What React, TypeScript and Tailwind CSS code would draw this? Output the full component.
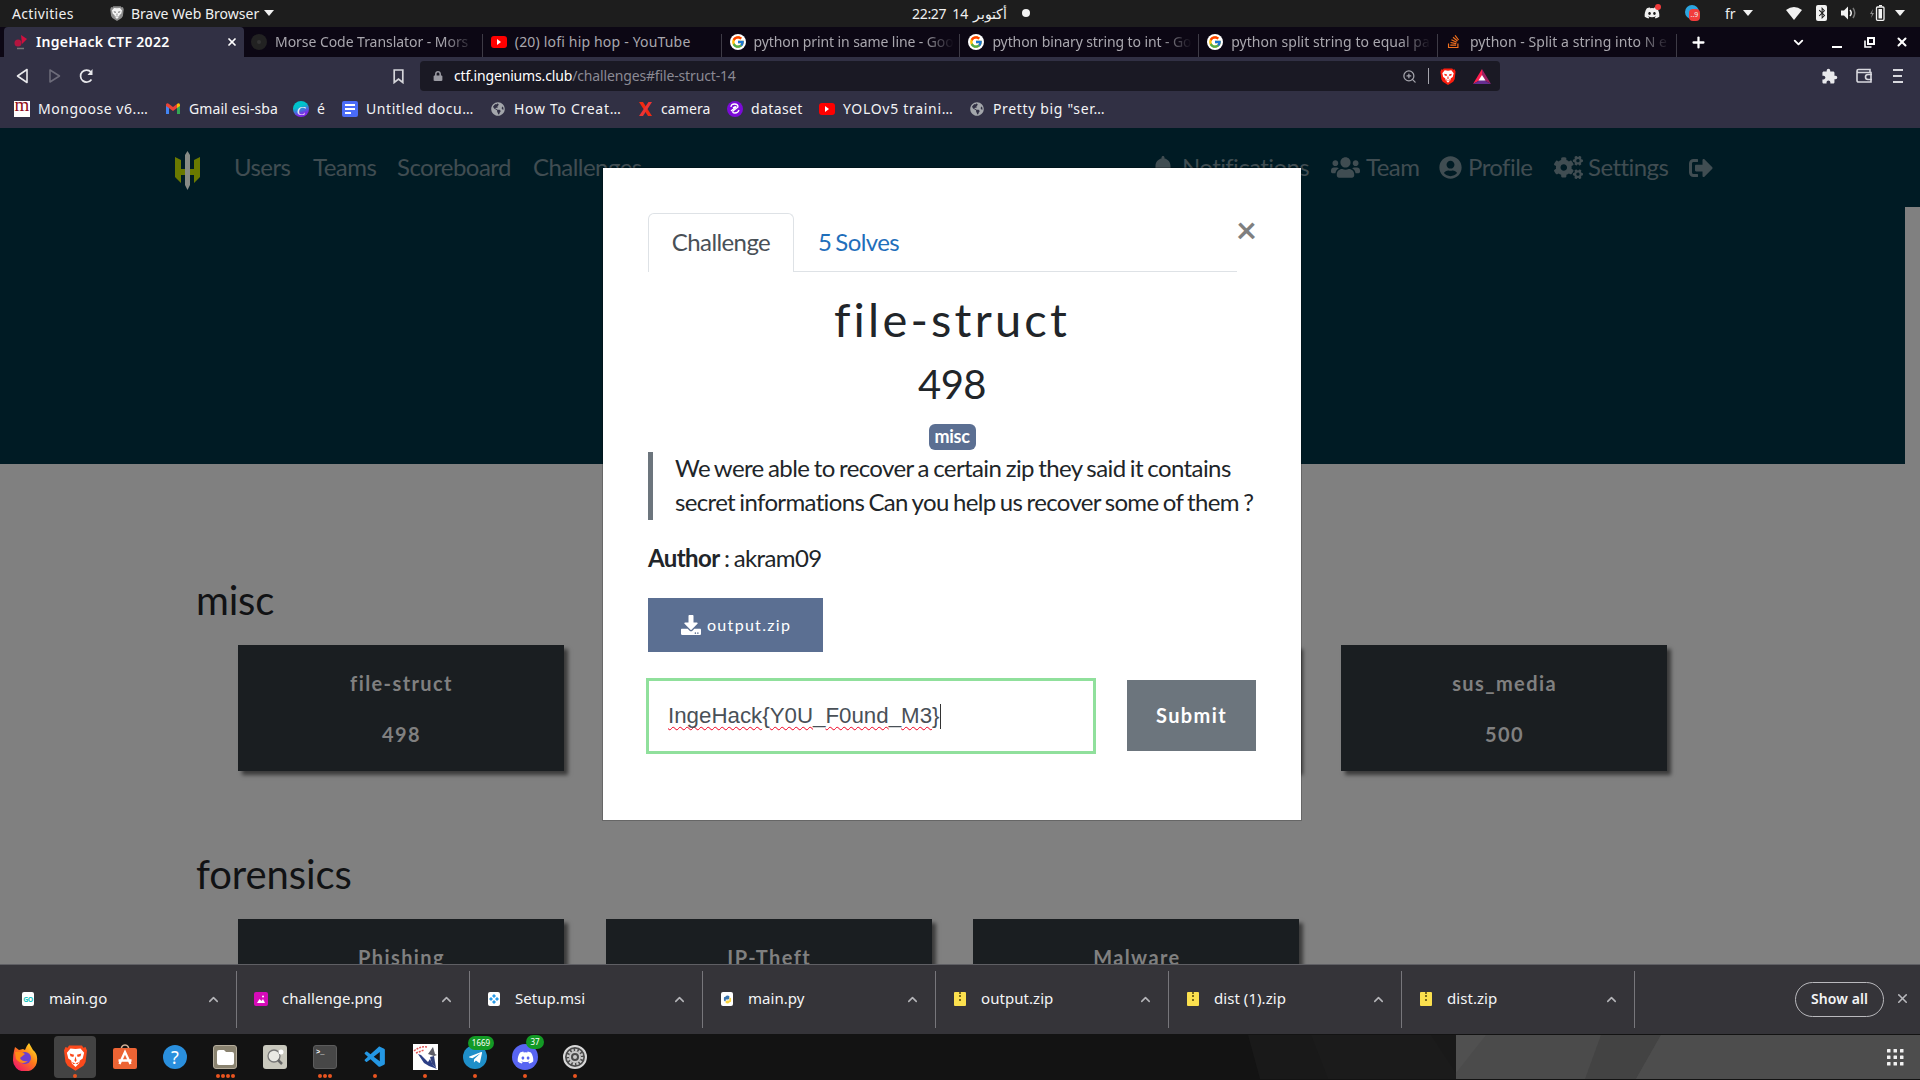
import React from "react";
import { FaBell, FaUsers, FaUserCircle, FaCogs, FaSignOutAlt, FaDownload, FaDiscord, FaLock, FaBluetoothB, FaStackOverflow, FaTelegramPlane, FaGlobeAmericas } from "react-icons/fa";
import { MdExtension } from "react-icons/md";
import { VscVscode } from "react-icons/vsc";
import { FcGoogle } from "react-icons/fc";
import { X, ChevronDown, ChevronUp, Plus, ZoomIn } from "lucide-react";

const Lion = ({ c, f, s }: { c: string; f: string; s: string }) => (
  <svg viewBox="0 0 32 38" className={s}>
    <path d="M7 3h18l2 3 3-1 2 5-2 16-3 5-11 7-11-7-3-5L0 10l2-5 3 1z" fill={c} />
    <path d="M9 7l7 1 7-1 5 6-2 8-4 3-1 4-5 5-5-5-1-4-4-3-2-8z" fill={f} />
    <path d="M8 14l6 2-1 3-4-1zM24 14l-6 2 1 3 4-1zM16 18l1.500 6-1.500 2-1.500-2zM11 26l5 2 5-2-2 3-3-1-3 1z" fill={c} />
  </svg>
);

const Caret = () => <span className="h-0 w-0 shrink-0 border-x-[5px] border-t-[6px] border-x-transparent border-t-[#f2f2f2]" />;

const Google = () => (
  <span className="grid size-4 place-items-center rounded-full bg-white"><FcGoogle size={14} /></span>
);
const Yt = () => (
  <span className="grid h-3 w-4 place-items-center rounded-[3px] bg-[#f00]">
    <span className="h-0 w-0 border-y-[3px] border-l-[4px] border-y-transparent border-l-white" />
  </span>
);

const tabs = [
  { t: "Morse Code Translator - Mors", k: "tracking-[-0.050px]", i: <span className="grid size-4 place-items-center rounded-full bg-[#222]"><span className="size-1 rounded-full bg-[#333]" /></span> },
  { t: "(20) lofi hip hop - YouTube", k: "tracking-[0.180px]", i: <Yt /> },
  { t: "python print in same line - Goo", k: "tracking-[-0.100px]", i: <Google /> },
  { t: "python binary string to int - Go", k: "tracking-[-0.100px]", i: <Google /> },
  { t: "python split string to equal pa", k: "tracking-[0.050px]", i: <Google /> },
  { t: "python - Split a string into N e", k: "tracking-[0.050px]", i: <FaStackOverflow size={15} color="#f2701d" /> },
];

function TopBar() {
  return (
    <div className="flex h-[27px] items-center bg-[#1d1d1d] pb-px pr-[15px] text-[14px] text-[#f0f0f0]">
      <span className="ml-3 w-[98px] tracking-[0.350px]">Activities</span>
      <Lion c="#8d8d8d" f="#f4f4f4" s="h-4 w-[14px]" />
      <span className="ml-[7px] mr-[5px] w-[128px] whitespace-nowrap">Brave Web Browser</span>
      <Caret />
      <span className="ml-[638px] flex w-[118px] items-center whitespace-nowrap">
        <span className="w-[43px] tracking-[-0.3px]">22:27</span>
        <span className="w-[22px]">14</span>
        <span className="w-[34px] text-[14px]" dir="rtl">أكتوبر</span>
        <span className="ml-[15px] size-2 shrink-0 rounded-full bg-[#f2f2f2]" />
      </span>
      <div className="ml-auto flex items-center">
        <span className="relative mr-[25px] w-4">
          <FaDiscord size={16} />
          <span className="absolute -top-px left-[11px] size-[6px] rounded-full bg-[#f23c3c]" />
        </span>
        <span className="relative mr-6 h-4 w-4">
          <span className="absolute left-0 top-0 size-[14px] rounded-full bg-[#2ca5e0]" />
          <span className="absolute left-1 top-1 grid h-3 w-[11px] place-items-center rounded bg-[#f23c3c] text-[7px]">..9</span>
        </span>
        <span className="w-[18px]">fr</span>
        <Caret />
        <svg className="ml-[33px]" width="16" height="13" viewBox="0 0 16 13"><path d="M0 3q8-6 16 0L8 13z" fill="#f2f2f2" /></svg>
        <span className="ml-[14px] grid h-4 w-[11px] place-items-center rounded-[2px] bg-[#f2f2f2] text-[#1d1d1d]"><FaBluetoothB size={12} /></span>
        <svg className="ml-[14px]" width="16" height="14" viewBox="0 0 16 14"><path d="M0 4.500h3l4-4v13l-4-4H0z" fill="#f2f2f2" /><path d="M9 4q2.500 3 0 6" stroke="#f2f2f2" strokeWidth="1.500" fill="none" /><path d="M12 2q3.500 5 0 10" stroke="#777" strokeWidth="1.500" fill="none" /></svg>
        <svg className="ml-[13px]" width="15" height="16" viewBox="0 0 15 16"><path d="M3 4L0 9h2l-1 4 3-5H2z" fill="#888" /><path d="M8 1.500h4V0H9v1.500" fill="#f2f2f2" /><rect x="6.500" y="2" width="7.500" height="13.300" rx="1" fill="none" stroke="#f2f2f2" strokeWidth="1.300" /><rect x="8.500" y="4" width="3.500" height="9.500" fill="#f2f2f2" /></svg>
        <span className="ml-[10px] flex"><Caret /></span>
      </div>
    </div>
  );
}

function TabBar() {
  return (
    <div className="flex h-[30px] bg-[#0c0714] pl-1 text-[14px]">
      <div className="flex w-[240px] items-center rounded-t-[4px] bg-[#313044] pb-px pl-[10px] font-semibold text-white">
        <svg width="14" height="16" viewBox="0 0 14 16"><circle cx="4" cy="9" r="3.500" fill="#b3153f" /><path d="M7 1l6 4-5 5z" fill="#d0103f" /><path d="M3 14.500h7" stroke="#777" strokeWidth="1.500" /></svg>
        <span className="ml-2 w-[190px] whitespace-nowrap tracking-[0.270px]">IngeHack CTF 2022</span>
        <X size={12} strokeWidth={3.500} />
      </div>
      {tabs.map((t, i) => (
        <div key={i} className={"relative flex w-[238.800px] shrink-0 items-center pb-px text-[#a9a7ae] " + (i === 0 ? "pl-[7px]" : "pl-[8px]")}>
          <span className="flex w-4 shrink-0 justify-center">{t.i}</span>
          <span className={"ml-2 w-[206px] whitespace-nowrap " + t.k + (i === 1 ? "" : " [mask-image:linear-gradient(to_right,black_82%,transparent_97%)]")}>{t.t}</span>
          <span className="absolute bottom-0 right-0 h-[23px] w-px bg-[#3e3b46]" />
        </div>
      ))}
      <div className="flex flex-1 items-center text-white">
        <Plus size={17} strokeWidth={3.200} className="ml-[13px] shrink-0" />
        <ChevronDown size={15} strokeWidth={3} className="ml-[84px] shrink-0" />
        <span className="ml-[26px] mt-[9px] h-[2px] w-[10px] bg-white" />
        <svg className="ml-[22px]" width="11" height="11" viewBox="0 0 11 11" fill="none" stroke="#fff" strokeWidth="2"><path d="M4 1h6v6H4z" /><path d="M1 3.500V10h6.500" strokeWidth="1.600" /></svg>
        <X size={14} strokeWidth={3.500} className="ml-[20px] shrink-0" />
      </div>
    </div>
  );
}

function Toolbar() {
  return (
    <div className="flex h-[38px] items-center text-[#e8e8ec]">
      <svg className="ml-4" width="12" height="16" viewBox="0 0 12 16"><path d="M11 1.500v13L1.500 8z" fill="none" stroke="#e8e8ec" strokeWidth="1.600" strokeLinejoin="round" /></svg>
      <svg className="ml-[21px]" width="12" height="16" viewBox="0 0 12 16"><path d="M1 2v12l9.500-6z" fill="none" stroke="#6d6c7a" strokeWidth="1.500" strokeLinejoin="round" /></svg>
      <svg className="ml-[18px]" width="15" height="16" viewBox="0 0 15 16"><path d="M12.500 11.500A6 6 0 1 1 12 4" fill="none" stroke="#e8e8ec" strokeWidth="1.700" /><path d="M13.500 1v6H8.500z" fill="#e8e8ec" /></svg>
      <svg className="ml-[299px]" width="11" height="15" viewBox="0 0 11 15"><path d="M1.200 1h8.600v12.500L5.500 10l-4.300 3.500z" fill="none" stroke="#d5d5da" strokeWidth="1.700" /></svg>
      <div className="ml-[16px] flex h-[30px] w-[1080px] items-center rounded-[4px] bg-[#1a1924]">
        <FaLock className="ml-[13px] text-[#9a9aa2]" size={10} />
        <span className="ml-[11px] w-[948px] whitespace-nowrap pb-px text-[14px] tracking-[-0.150px] text-[#8b8a94]"><span className="text-white">ctf.ingeniums.club</span>/challenges#file-struct-14</span>
        <ZoomIn size={15} className="text-[#a5a5ad]" />
        <span className="ml-[11px] h-4 w-px bg-[#a5a5ad]" />
        <Lion c="#fb1d0e" f="#fff" s="ml-[11px] h-[18px] w-4" />
        <svg className="ml-[17px]" width="18" height="15" viewBox="0 0 18 15"><path d="M9 0L0 15l9-5z" fill="#ff1f50" /><path d="M9 0l9 15-9-5z" fill="#9e1f63" /><path d="M0 15h18l-9-5z" fill="#662d91" /><path d="M9 6l3.500 5.500h-7z" fill="#fff" /></svg>
      </div>
      <MdExtension className="ml-[321px]" size={17} />
      <svg className="ml-[18px]" width="17" height="16" viewBox="0 0 17 16" fill="none" stroke="#d8d8de" strokeWidth="1.600"><path d="M14 4V1.500H2.500a1.500 1.500 0 0 0 0 3H15V14H2.500A1.500 1.500 0 0 1 1 12.500V3" /><path d="M16 6.500h-4a2.500 2.500 0 0 0 0 5h4" /></svg>
      <span className="ml-5 flex flex-col gap-1"><i className="h-[2px] w-[10px] bg-[#d8d8de]" /><i className="h-[2px] w-[9px] bg-[#d8d8de]" /><i className="h-[2px] w-[10px] bg-[#d8d8de]" /></span>
    </div>
  );
}

const marks = [
  { w: "w-[151px]", k: "tracking-[0.520px]", t: "Mongoose v6.…", i: <span className="flex size-4 justify-center bg-white font-['Liberation_Serif'] text-[19px] leading-[7px] text-[#8f0e18]">m</span> },
  { w: "w-[128px]", k: "tracking-[0.080px]", t: "Gmail esi-sba", i: <svg width="14" height="11" viewBox="0 0 14 11"><path d="M0 2v9h3V4z" fill="#4285f4" /><path d="M14 2v9h-3V4z" fill="#34a853" /><path d="M0 1.500Q1-.5 3 1l4 3 4-3v4L7 8 0 3z" fill="#ea4335" /><path d="M11 1q2-1.500 3 .5V3l-3 2z" fill="#fbbc04" /></svg> },
  { w: "w-[49px]", k: "", t: "é", i: <span className="grid size-4 place-items-center rounded-full bg-[linear-gradient(160deg,#00c4cc_35%,#7d2ae8_75%)] font-['Liberation_Serif'] text-[13px] italic">C</span> },
  { w: "w-[148px]", k: "tracking-[0.570px]", t: "Untitled docu…", i: <span className="flex size-4 flex-col justify-center gap-[2px] rounded-[2px] bg-[#4a6cf7] pl-[3px]"><i className="h-[2px] w-[10px] bg-white" /><i className="h-[2px] w-[10px] bg-white" /><i className="h-[2px] w-[6px] bg-white" /></span> },
  { w: "w-[147px]", k: "tracking-[0.700px]", t: "How To Creat…", i: <FaGlobeAmericas size={14} color="#a3a6ab" /> },
  { w: "w-[90px]", k: "tracking-[0.100px]", t: "camera", i: <svg width="13" height="14" viewBox="0 0 13 14"><path d="M0 0h4l9 14H9z" fill="#f22a12" /><path d="M13 0H9.500L0 14h4z" fill="#e33" /></svg> },
  { w: "w-[92px]", k: "tracking-[0.400px]", t: "dataset", i: <span className="grid size-4 place-items-center rounded-full bg-[#7b0ad8]"><svg width="10" height="11" viewBox="0 0 10 11" fill="none" stroke="#fff" strokeWidth="1.300"><path d="M1 4q0-3 3.500-3T8 4L3 8q-1 2 2 2t4-3" /><path d="M3 5q2-2 3-1L1 8" /></svg></span> },
  { w: "w-[150px]", k: "tracking-[0.700px]", t: "YOLOv5 traini…", i: <Yt /> },
  { w: "w-[150px]", k: "tracking-[0.650px]", t: "Pretty big \"ser…", i: <FaGlobeAmericas size={14} color="#a3a6ab" /> },
];

function Bookmarks() {
  return (
    <div className="flex h-[27px] items-center pl-[14px] text-[14px] text-[#f4f4f6]">
      {marks.map((m) => (
        <div key={m.t} className={"flex shrink-0 items-center whitespace-nowrap " + m.w}>
          <span className="mr-2 flex h-4 w-4 shrink-0 items-center justify-center">{m.i}</span>
          <span className={"pb-px " + m.k}>{m.t}</span>
        </div>
      ))}
    </div>
  );
}

const Card = ({ t, p }: { t: string; p: string }) => (
  <div className="flex h-[126px] w-[326px] shrink-0 flex-col items-center gap-[21px] bg-[#1a1e21] pl-px pt-[23px] text-[20px] font-bold leading-[30px] tracking-[1.400px] text-[#808080] shadow-[4px_4px_4px_rgba(0,0,0,0.55)]">
    <span>{t}</span>
    <span>{p}</span>
  </div>
);

function Page() {
  return (
    <div className="relative h-[836px] overflow-hidden bg-[#808080] font-[Lato,sans-serif]">
      <div className="h-[79px] bg-[#001b24] text-[24px] tracking-[-0.550px] text-[#404d52]">
        <div className="flex h-[79px] items-center">
          <svg className="ml-[175px] mt-[6px]" width="25" height="40" viewBox="0 0 25 40"><path d="M0 6l6 3v9h13V9l6-3v20l-6 6v-8H6v8l-6-6z" fill="#6a7900" /><path d="M12.500 0l2.500 4v30l-2.500 5-2.500-5V4z" fill="#878a85" /></svg>
          <span className="ml-[34px] w-[79px] pb-px">Users</span>
          <span className="w-[84px] pb-px">Teams</span>
          <span className="w-[136px] pb-px">Scoreboard</span>
          <span className="w-[622px] pb-px">Challenges</span>
          <FaBell size={24} className="-ml-[4px]" />
          <span className="ml-[7px] w-[149px] pb-px tracking-[-0.600px]">Notifications</span>
          <FaUsers size={29} />
          <span className="ml-[6px] w-[73px] pb-px">Team</span>
          <FaUserCircle size={23} />
          <span className="ml-[6px] w-[86px] pb-px">Profile</span>
          <FaCogs size={29} />
          <span className="ml-[5px] w-[101px] pb-px">Settings</span>
          <FaSignOutAlt size={24} />
        </div>
      </div>
      <div className="h-[257px] w-[1905px] bg-[#001b24]" />
      <h2 className="ml-[196px] mt-[110px] h-[71px] text-[40px] leading-[52px] tracking-[-0.200px] text-[#111214]">misc</h2>
      <div className="ml-[238px] flex gap-[41.700px]">
        <Card t="file-struct" p="498" /><Card t="" p="" /><Card t="" p="" /><Card t="sus_media" p="500" />
      </div>
      <h2 className="ml-[196px] mt-[77px] h-[71px] text-[40px] leading-[52px] tracking-[-0.100px] text-[#111214]">forensics</h2>
      <div className="ml-[238px] flex gap-[41.700px]">
        <Card t="Phishing" p="" /><Card t="IP-Theft" p="" /><Card t="Malware" p="" />
      </div>
      <Modal />
    </div>
  );
}

const Misspelt = ({ children }: { children: React.ReactNode }) => (
  <span className="underline decoration-[#f00020] decoration-wavy decoration-1 underline-offset-[3px] [text-decoration-skip-ink:none]">{children}</span>
);

function Modal() {
  return (
    <div className="absolute left-[602px] top-[39px] h-[654px] w-[700px] border border-black/20 bg-white bg-clip-padding pl-[45px] text-[24px] tracking-[-0.600px] text-[#212529]">
      <div className="mt-[45px] flex">
        <div className="flex h-[59px] w-[589px]">
          <div className="w-[146px] rounded-t-[6px] border border-b-0 border-[#dee2e6] pt-[10px] text-center leading-[36px] text-[#495057]">Challenge</div>
          <div className="flex-1 border-b border-[#dee2e6] pl-6 pt-[11px] leading-[36px] text-[#1f6fbb] [word-spacing:-1.500px]">5 Solves</div>
        </div>
        <span className="-ml-px -mt-px text-[36px] font-bold leading-[34px] text-[#7f7f7f]">×</span>
      </div>
      <div className="w-[608px] text-center">
        <h1 className="mt-[19px] text-[47px] leading-[56px] tracking-[3.200px]">file-struct</h1>
        <h2 className="mt-[13px] text-[40px] leading-[48px]">498</h2>
        <div className="mt-[16px] flex justify-center"><span className="h-[26px] w-[47px] rounded-[6px] bg-[#5b6f92] text-[18px] font-bold leading-[25px] tracking-[-0.300px] text-white">misc</span></div>
      </div>
      <blockquote className="mt-[2px] h-[68px] whitespace-nowrap border-l-[5px] border-[#6c757d] pl-[22px] leading-[34px] [word-spacing:-1.200px]">
        <div className="relative -top-px">We were able to recover a certain zip they said it contains<br /><span className="tracking-[-0.650px]">secret informations Can you help us recover some of them ?</span></div>
      </blockquote>
      <p className="mt-[21px] leading-[34px] [word-spacing:-1.200px]"><b>Author</b> : akram09</p>
      <div className="mt-[23px] flex h-[54px] w-[175px] items-center bg-[#5b6f92] pl-[33px] text-white">
        <FaDownload size={20} /><span className="ml-[6px] text-[16px] tracking-[1.300px]">output.zip</span>
      </div>
      <div className="mt-[26px] flex">
        <div className="-ml-[2px] flex h-[76px] w-[450px] items-center border-[3px] border-[#90e09c] pl-[19px] font-['Liberation_Sans',sans-serif] text-[22.300px] tracking-normal text-[#495057]">
          <Misspelt>IngeHack</Misspelt>{"{"}<Misspelt>Y0U</Misspelt>_<Misspelt>F0und</Misspelt>_<Misspelt>M3</Misspelt>{"}"}
          <span className="h-[25px] w-px bg-[#333]" />
        </div>
        <div className="ml-[31px] mt-[2px] h-[71px] w-[129px] bg-[#6c757d] text-center text-[20px] font-bold leading-[71px] tracking-[1.400px] text-white">Submit</div>
      </div>
    </div>
  );
}

const Zip = () => <span className="flex h-[14px] w-3 justify-center rounded-[1px] bg-[#fbe04e]"><i className="h-[9px] border-l-2 border-dotted border-[#7b6a1a]" /></span>;
const files = [
  { t: "main.go", i: <span className="grid h-[14px] w-3 place-items-center rounded-[2px] bg-white text-[7px] font-bold leading-none tracking-[-0.5px] text-[#1cc5c0]">GO</span> },
  { t: "challenge.png", i: <span className="grid size-[14px] place-items-center rounded-[2px] bg-[#d60bb8]"><svg width="8" height="8" viewBox="0 0 8 8"><path d="M0 8l2.500-4 2 2L6 4l2 4z" fill="#fff" /><circle cx="6" cy="1.500" r="1" fill="#fff" /></svg></span> },
  { t: "Setup.msi", i: <span className="grid h-[14px] w-3 place-items-center rounded-[2px] bg-white"><svg width="10" height="10" viewBox="0 0 10 10"><path d="M5 0l2 2-2 2-2-2zM2 3l2 2-2 2-2-2zM8 3l2 2-2 2-2-2zM5 6l2 2-2 2-2-2z" fill="#299be8" /></svg></span> },
  { t: "main.py", i: <span className="grid h-[14px] w-3 place-items-center rounded-[2px] bg-white"><svg width="9" height="9" viewBox="0 0 10 10"><path d="M1 5V3q0-1 2-1V1q2-1 4 0v3q0 1-2 1H3v2H2Q1 7 1 5" fill="#3a74ad" /><path d="M9 4v3q0 1-2 1v1q-2 1-4 0V7q0-1 2-1h2V3h1q1 0 1 1" fill="#fcd53c" /></svg></span> },
  { t: "output.zip", i: <Zip /> },
  { t: "dist (1).zip", i: <Zip /> },
  { t: "dist.zip", i: <Zip /> },
];

function Downloads() {
  return (
    <div className="flex h-[70px] border-t border-[#5f5f64] bg-[#353439] text-[15px] text-[#f4f4f6]">
      {files.map((f, i) => (
        <div key={f.t} className={"my-[6px] flex items-center border-r border-[#77767b] pb-px " + (i === 0 ? "w-[237px] pl-[21px]" : "w-[233px] pl-[17px]")}>
          <span className="flex w-[14px] justify-center">{f.i}</span>
          <span className="ml-[14px] w-[157px] whitespace-nowrap pb-px tracking-[0.050px]">{f.t}</span>
          <ChevronUp size={15} strokeWidth={2.500} className="text-[#b5b5b9]" />
        </div>
      ))}
      <span className="ml-[160px] mt-[17px] h-[35px] w-[89px] rounded-full border border-[#b9b9bd] text-center text-[14px] font-semibold leading-[32px] tracking-[0.100px]">Show all</span>
      <X size={15} strokeWidth={2.500} className="ml-[11px] mt-[26px] text-[#b9b9bd]" />
    </div>
  );
}

const badge = "absolute -top-[9px] grid h-[14px] place-items-center rounded-full bg-[#139a25] text-[8px] text-white ";
const dock = [
  { n: 0, i: <svg width="26" height="28" viewBox="0 0 26 28"><defs><linearGradient id="ff" x1="1" y1="0" x2="0.2" y2="1"><stop offset="0.1" stopColor="#ffe226" /><stop offset="0.5" stopColor="#ff7a1a" /><stop offset="1" stopColor="#f0146a" /></linearGradient></defs><path d="M2 8l1-4 4 3 4-1 2 1q2-5 4-7l4 7q5 4 4 11a12 11 0 0 1-24-1q0-5 1-9" fill="url(#ff)" /><circle cx="13" cy="15" r="6" fill="#6d3fd0" /><path d="M3 9q7-1 10 2l-5 4q2 4 8 3-6 5-12-2z" fill="#ff8a16" /></svg> },
  { n: 1, i: <Lion c="#fb4a1c" f="#fff" s="h-[28px] w-[23px]" /> },
  { n: 0, i: <svg width="24" height="26" viewBox="0 0 24 26"><path d="M8 7q0-6 4-6t4 6" fill="none" stroke="#d6b49a" strokeWidth="1.500" /><rect y="4" width="24" height="21" rx="2" fill="#ed6434" /><path d="M6.500 20L12 8l5.500 12M5.500 16.500h13" fill="none" stroke="#fff" strokeWidth="2.300" /></svg> },
  { n: 0, i: <span className="grid size-[24px] place-items-center rounded-full bg-[#2a8fdd] text-[18px] leading-none text-white">?</span> },
  { n: 4, i: <span className="grid size-[24px] place-items-center rounded-[3px] border border-[#b5ad9c] bg-[#8a8370]"><svg width="17" height="15" viewBox="0 0 17 15"><path d="M0 2q0-2 2-2h5l2 2h6q2 0 2 2v9q0 2-2 2H2q-2 0-2-2z" fill="#fff" /></svg></span> },
  { n: 0, i: <span className="grid size-[24px] place-items-center rounded-[3px] bg-[#c9c8bd]"><svg width="18" height="18" viewBox="0 0 18 18"><circle cx="8" cy="8" r="6" fill="#e9e9e4" stroke="#777" strokeWidth="1.300" /><path d="M12 12l4 4" stroke="#666" strokeWidth="2.500" /><circle cx="15" cy="4" r="2.500" fill="#fff" /></svg></span> },
  { n: 3, i: <span className="size-[24px] rounded-[3px] border border-[#5c5c5c] bg-[#474747] pl-[2px] font-['Liberation_Mono'] text-[7px] font-bold leading-[12px] text-white">&gt;_</span> },
  { n: 1, i: <VscVscode size={25} color="#2497e3" /> },
  { n: 1, i: <svg width="25" height="26" viewBox="0 0 25 26"><path d="M0 0h25v26H0z" fill="#fff" /><path d="M1 7q6-5 13-4M3 9l8-3" stroke="#e05a5a" strokeWidth="1.500" fill="none" strokeDasharray="2 1" /><path d="M5 10l3 1 7 7 2-3 3 6 4 4-8-3-5-3z" fill="#2c3f86" /><path d="M15 10l5-7 2 7 2 1-3 1z" fill="#5c5c66" /><path d="M17 13l4-1 2 12-4-4z" fill="#33427c" /></svg> },
  { n: 1, i: <span className="relative grid size-[24px] place-items-center rounded-full bg-[#1f8fc9]"><FaTelegramPlane size={15} color="#fff" /><span className={badge + "left-[5px] w-[26px]"}>1669</span></span> },
  { n: 1, i: <span className="relative grid size-[26px] place-items-center rounded-full bg-[#5865f2]"><FaDiscord size={17} color="#fff" /><span className={badge + "left-[14px] w-[18px]"}>37</span></span> },
  { n: 1, i: <svg width="24" height="24" viewBox="0 0 24 24"><circle cx="12" cy="12" r="11" fill="#4b4b4b" stroke="#d8d8d8" strokeWidth="2" /><circle cx="12" cy="12" r="7" fill="none" stroke="#c9c9c9" strokeWidth="2.500" strokeDasharray="2.200 1.460" /><circle cx="12" cy="12" r="5" fill="none" stroke="#c9c9c9" strokeWidth="2" /><circle cx="12" cy="12" r="2" fill="#c9c9c9" /></svg> },
];

function Dock() {
  return (
    <div className="flex h-[46px] bg-[#131313]">
      {dock.map((d, i) => (
        <div key={i} className="flex w-[50px] shrink-0 justify-center pt-[2px]">
          <div className={"relative grid h-[42px] w-[42px] place-items-center rounded-[4px] " + (i === 1 ? "bg-[#434343]" : "")}>
            {d.i}
            <span className="absolute bottom-0 left-0 flex w-full justify-center gap-px">
              {Array.from({ length: d.n }, (_, k) => <i key={k} className="size-1 rounded-full bg-[#e95420]" />)}
            </span>
          </div>
        </div>
      ))}
      <svg className="ml-auto" width="672" height="46" viewBox="0 0 672 46">
        <path d="M0 1h208v44H12z" fill="#191919" /><path d="M63 1h120l25 38v6H80z" fill="#1b1b1b" />
        <path d="M208 1h464v44H208z" fill="#4b4b4b" /><path d="M208 1h30l-30 38z" fill="#505050" /><path d="M353 1h60l-25 44h-51z" fill="#434343" /><path d="M413 1h259v44H388z" fill="#4d4d4d" />
        {[0, 1, 2].map((r) => [0, 1, 2].map((c) => <rect key={r * 3 + c} x={639 + c * 6.5} y={15 + r * 6.5} width="3.500" height="3.500" rx="0.500" fill="#f2f2f2" />))}
      </svg>
    </div>
  );
}

export default function App() {
  return (
    <div className="h-[1080px] w-[1920px] overflow-hidden font-['Noto_Sans','Noto_Sans_CJK_SC',sans-serif]">
      <TopBar />
      <TabBar />
      <div className="h-[71px] bg-[#313044]">
        <Toolbar />
        <Bookmarks />
      </div>
      <Page />
      <Downloads />
      <Dock />
    </div>
  );
}
